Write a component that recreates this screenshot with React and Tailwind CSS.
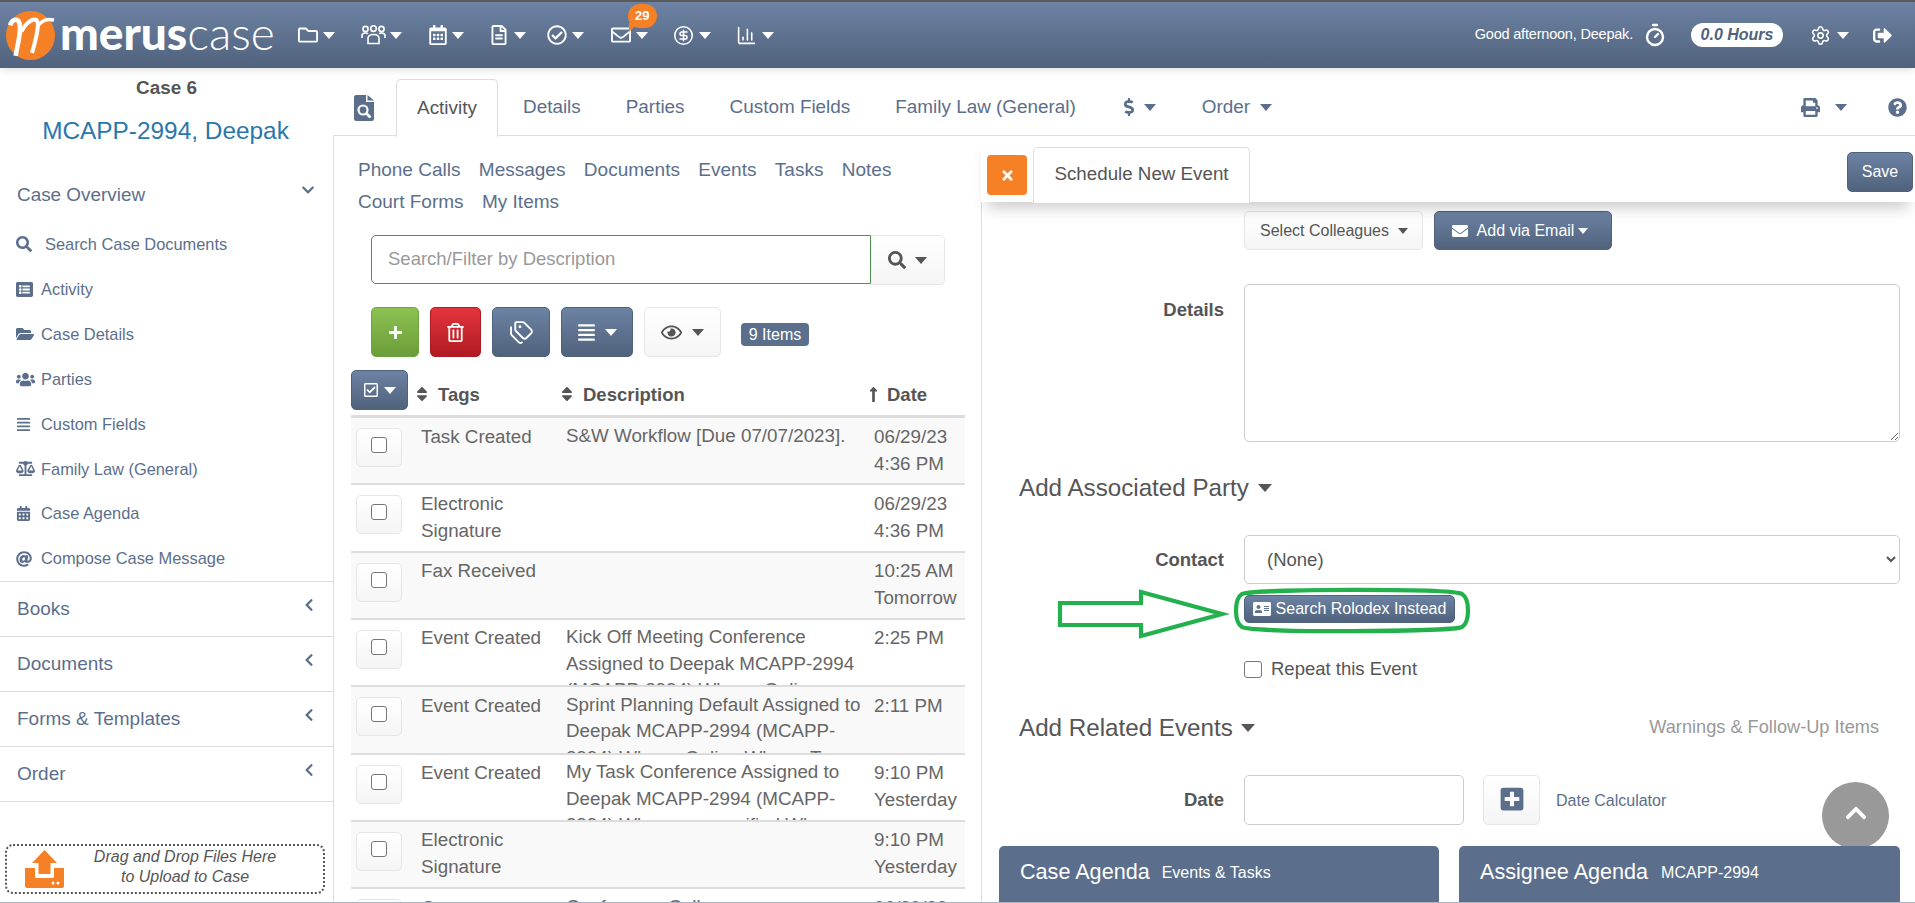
import React from "react";
import {
  FaAddressCard,
  FaAlignJustify,
  FaAt,
  FaBalanceScale,
  FaCalendarAlt,
  FaChevronDown,
  FaChevronLeft,
  FaChevronUp,
  FaDollarSign,
  FaEnvelope,
  FaFolderOpen,
  FaListAlt,
  FaLongArrowAltUp,
  FaPlus,
  FaPlusSquare,
  FaPrint,
  FaQuestionCircle,
  FaRegCalendarAlt,
  FaRegCheckCircle,
  FaRegCheckSquare,
  FaRegEnvelope,
  FaRegEye,
  FaRegFileAlt,
  FaRegFolder,
  FaRegTrashAlt,
  FaSearch,
  FaSignOutAlt,
  FaSort,
  FaTimes,
  FaUsers,
} from "react-icons/fa";
import { ChartColumn, CircleDollarSign, Settings, Tags, Timer } from "lucide-react";

const caretSizes = {
  sm: "border-x-[5px] border-t-[6px]",
  md: "border-x-[6px] border-t-[7px]",
  lg: "border-x-[7px] border-t-[8px]",
};

const Caret = ({ color = "border-t-white", size = "md" }) => (
  <span className={`inline-block w-0 h-0 border-x-transparent ${caretSizes[size]} ${color}`} />
);

const PeopleIcon = () => (
  <svg width="25" height="20" viewBox="0 0 25 20" fill="none" stroke="white" strokeWidth="1.6">
    <circle cx="4.5" cy="4" r="2.6" />
    <circle cx="12.5" cy="3.6" r="2.8" />
    <circle cx="20.5" cy="4" r="2.6" />
    <path d="M1 13v-2.5C1 9 2.5 8 4.5 8c1 0 1.8.2 2.4.7" />
    <path d="M24 13v-2.5C24 9 22.5 8 20.5 8c-1 0-1.8.2-2.4.7" />
    <path d="M7 18.5v-5C7 11 9 9.500 12.500 9.500S18 11 18 13.500v5z" />
  </svg>
);

const Logo = () => (
  <div className="flex items-center ml-[6px]">
    <svg width="49" height="49" viewBox="0 0 48 48" className="shrink-0">
      <circle cx="24" cy="24" r="24" fill="#f58025" />
      <path d="M4 14C6 8 12 6 13.500 13C15 22 11 33 9.500 44" stroke="white" strokeWidth="4.500" fill="none" />
      <path d="M15 20C20 11 26 7 30 9C33 12 30 25 25.500 41" stroke="white" strokeWidth="4" fill="none" />
      <path d="M31 15C35 9 40 7 47 9" stroke="white" strokeWidth="3.500" fill="none" />
    </svg>
    <span className="ml-[5px] font-['Lato',sans-serif] text-[46px] leading-none text-white font-black -mt-[4px]">merus</span>
    <span className="font-['Lato',sans-serif] text-[46px] leading-none text-white font-light -mt-[4px]">case</span>
  </div>
);

const navItems = [
  { icon: <FaRegFolder size={20} color="white" />, width: "w-[63px]", gap: "gap-[5px]" },
  { icon: <PeopleIcon />, width: "w-[67px]", gap: "gap-[4px]" },
  { icon: <FaRegCalendarAlt size={20} color="white" />, width: "w-[61px]", gap: "gap-[4px]" },
  { icon: <FaRegFileAlt size={20} color="white" />, width: "w-[58px]", gap: "gap-[5px]" },
  { icon: <FaRegCheckCircle size={20} color="white" />, width: "w-[64px]", gap: "gap-[5px]" },
  { icon: <FaRegEnvelope size={20} color="white" />, width: "w-[62px]", gap: "gap-[5px]", badge: "29" },
  { icon: <CircleDollarSign size={21} color="white" strokeWidth={1.8} />, width: "w-[63px]", gap: "gap-[5px]" },
  { icon: <ChartColumn size={21} color="white" strokeWidth={1.8} />, width: "w-[50px]", gap: "gap-[5px]" },
];

const Header = () => (
  <header className="h-[68px] shrink-0 border-t-2 border-[#5a5a5a] bg-gradient-to-b from-[#6d83a4] to-[#50627c] flex items-center relative z-20 shadow-[0_2px_8px_rgba(0,0,0,0.12)]">
    <Logo />
    <nav className="flex items-center ml-[23px]">
      {navItems.map((item, i) => (
        <div key={i} className={`relative flex items-center ${item.width} ${item.gap}`}>
          {item.icon}
          <Caret />
          {item.badge && (
            <span className="absolute -top-[21px] left-[17px] w-[29px] h-[24px] rounded-full bg-[#f58025] text-white text-[13px] font-bold flex items-center justify-center">
              {item.badge}
              <span className="absolute left-[1px] -bottom-[4px] w-0 h-0 border-t-[9px] border-r-[9px] border-r-transparent border-t-[#f58025]" />
            </span>
          )}
        </div>
      ))}
    </nav>
    <div className="ml-auto flex items-center text-white">
      <span className="text-[14.500px] tracking-[-0.2px]">Good afternoon, Deepak.</span>
      <Timer size={24} strokeWidth={2.4} className="ml-[10px]" />
      <span className="ml-[24px] w-[92px] h-[24px] rounded-full bg-white text-[#50627c] italic font-bold text-[16px] flex items-center justify-center">
        0.0 Hours
      </span>
      <Settings size={21} strokeWidth={1.8} className="ml-[27px]" />
      <span className="ml-[6px] flex"><Caret /></span>
      <FaSignOutAlt size={19} className="ml-[24px] mr-[23px]" />
    </div>
  </header>
);

const overviewLinks = [
  { label: "Search Case Documents", icon: <FaSearch size={16} />, gap: "w-[29px]" },
  { label: "Activity", icon: <FaListAlt size={17} />, gap: "w-[25px]" },
  { label: "Case Details", icon: <FaFolderOpen size={18} />, gap: "w-[25px]" },
  { label: "Parties", icon: <FaUsers size={19} />, gap: "w-[25px]" },
  { label: "Custom Fields", icon: <FaAlignJustify size={15} />, gap: "w-[25px]" },
  { label: "Family Law (General)", icon: <FaBalanceScale size={19} />, gap: "w-[25px]" },
  { label: "Case Agenda", icon: <FaCalendarAlt size={15} />, gap: "w-[25px]" },
  { label: "Compose Case Message", icon: <FaAt size={16} />, gap: "w-[25px]" },
];

const UploadIcon = () => (
  <svg width="39" height="38" viewBox="0 0 39 38" className="shrink-0">
    <path d="M19.500 0L32 13H25.500V24H13.500V13H7z" fill="#f58025" />
    <path d="M0 18H10V26.500C10 27.500 11 28 12 28H27C28 28 29 27.500 29 26.500V18H39V36C39 37 38 38 37 38H2C1 38 0 37 0 36z" fill="#f58025" />
    <circle cx="28" cy="33" r="1.500" fill="white" />
    <circle cx="33" cy="33" r="1.500" fill="white" />
  </svg>
);

const Sidebar = () => (
  <aside className="w-[333px] shrink-0 flex flex-col relative z-0">
    <div className="mt-[10px] h-[20px] text-center text-[18.900px] leading-[20px] font-bold text-[#555]">Case 6</div>
    <div className="mt-[17px] pr-[2px] h-[32px] text-center text-[24.400px] leading-[32px] text-[#2a78ab]">MCAPP-2994, Deepak</div>
    <div className="mt-[28px] h-[40px] pl-[17px] pr-[18px] flex items-center justify-between text-[18.900px] text-[#5b6f8c]">
      <span>Case Overview</span>
      <FaChevronDown size={14} className="-mt-[10px]" />
    </div>
    <div className="mt-[7px]">
      {overviewLinks.map((link) => (
        <div key={link.label} className="h-[44.900px] pl-[16px] flex items-center text-[16.400px] text-[#5b6f8c]">
          <span className={`flex shrink-0 ${link.gap}`}>{link.icon}</span>
          {link.label}
        </div>
      ))}
    </div>
    {["Books", "Documents", "Forms & Templates", "Order"].map((section) => (
      <div key={section} className="h-[55px] border-t border-[#ddd] pl-[17px] pr-[17px] flex items-center justify-between text-[19px] text-[#5b6f8c]">
        <span>{section}</span>
        <FaChevronLeft size={14} className="-mt-[8px]" />
      </div>
    ))}
    <div className="border-t border-[#ddd]" />
    <div className="mt-[42px] ml-[5px] w-[320px] h-[50px] border-2 border-dotted border-[#555] rounded-[8px] flex items-center pl-[18px]">
      <UploadIcon />
      <div className="flex-1 pr-[17px] -mt-[4px] text-center italic text-[16px] leading-[20px] text-[#555]">
        Drag and Drop Files Here
        <br />
        to Upload to Case
      </div>
    </div>
  </aside>
);

const FileSearchIcon = () => (
  <svg width="20" height="26" viewBox="0 0 20 26" className="shrink-0">
    <path d="M2 0H12V7H20V24C20 25 19 26 18 26H2C1 26 0 25 0 24V2C0 1 1 0 2 0Z" fill="#5b6f8c" />
    <path d="M13.500 0L20 5.500H13.500z" fill="#5b6f8c" />
    <circle cx="9" cy="15" r="4.500" fill="none" stroke="white" strokeWidth="2.200" />
    <path d="M12.500 18.500L16.500 22.500" stroke="white" strokeWidth="2.600" />
  </svg>
);

const TabBar = () => (
  <div className="h-[68px] shrink-0 border-b border-[#ddd] pt-[11px] flex items-center text-[18.900px] text-[#5b6f8c]">
    <span className="ml-[21px] mt-[2px] flex"><FileSearchIcon /></span>
    <div className="ml-[22px] w-[102px] h-[58px] -mb-px bg-white border border-b-0 border-[#ddd] rounded-t-[5px] flex items-center justify-center text-[#555] relative z-10">
      Activity
    </div>
    <span className="ml-[25px]">Details</span>
    <span className="ml-[45px]">Parties</span>
    <span className="ml-[45px]">Custom Fields</span>
    <span className="ml-[45px]">Family Law (General)</span>
    <span className="ml-[44px] flex items-center">
      <FaDollarSign size={18} />
      <span className="ml-[6px] flex"><Caret color="border-t-[#5b6f8c]" /></span>
    </span>
    <span className="ml-[46px]">Order</span>
    <span className="ml-[10px] flex"><Caret color="border-t-[#5b6f8c]" /></span>
    <span className="ml-auto flex"><FaPrint size={19} /></span>
    <span className="ml-[15px] flex"><Caret color="border-t-[#5b6f8c]" /></span>
    <span className="ml-[41px] mr-[8px] flex"><FaQuestionCircle size={19} /></span>
  </div>
);

const rows = [
  { tag: "Task Created", desc: "S&W Workflow [Due 07/07/2023].", date: ["06/29/23", "4:36 PM"] },
  { tag: "Electronic Signature", desc: "", date: ["06/29/23", "4:36 PM"] },
  { tag: "Fax Received", desc: "", date: ["10:25 AM", "Tomorrow"] },
  { tag: "Event Created", desc: "Kick Off Meeting Conference Assigned to Deepak MCAPP-2994 (MCAPP-2994) Where: Online", date: ["2:25 PM"] },
  { tag: "Event Created", desc: "Sprint Planning Default Assigned to Deepak MCAPP-2994 (MCAPP-2994) Where: Online Where: T", date: ["2:11 PM"] },
  { tag: "Event Created", desc: "My Task Conference Assigned to Deepak MCAPP-2994 (MCAPP-2994) Where: unspecified Wh", date: ["9:10 PM", "Yesterday"] },
  { tag: "Electronic Signature", desc: "", date: ["9:10 PM", "Yesterday"] },
  { tag: "Comment", desc: "Conference Call", date: ["06/29/23"] },
];

const blueButton = "bg-gradient-to-b from-[#6d83a4] to-[#50627c] border border-[#50627c] rounded-[5px] text-white flex items-center justify-center";
const whiteButton = "bg-gradient-to-b from-white to-[#f5f5f5] border border-[#e6e6e6] rounded-[5px] flex items-center justify-center";
const checkBox = "appearance-none bg-white border border-[#767676] rounded-[3px]";

const ActivityPanel = () => (
  <section className="w-[648px] shrink-0 border-l border-[#ddd] overflow-hidden">
    <div className="pt-[18px] pl-[24px] pr-[60px] flex flex-wrap gap-x-[18.400px] text-[19px] leading-[32px] text-[#5b6f8c]">
      {["Phone Calls", "Messages", "Documents", "Events", "Tasks", "Notes", "Court Forms", "My Items"].map((link) => (
        <span key={link}>{link}</span>
      ))}
    </div>
    <div className="mt-[17px] ml-[37px] flex h-[50px]">
      <input
        placeholder="Search/Filter by Description"
        className="w-[500px] h-[49px] border border-[#4f8f4f] rounded-l-[5px] pl-[16px] pb-[2px] text-[18.500px] outline-none placeholder:text-[#999]"
      />
      <div className={`${whiteButton} w-[74px] rounded-l-none border-l-0 gap-[9px] text-[#555]`}>
        <FaSearch size={18} />
        <Caret color="border-t-[#555]" />
      </div>
    </div>
    <div className="mt-[22px] ml-[37px] flex items-start h-[50px]">
      <div className="w-[48px] h-[50px] rounded-[5px] border border-[#6fa33f] bg-gradient-to-b from-[#8cc152] to-[#6b9e3a] text-white flex items-center justify-center">
        <FaPlus size={15} />
      </div>
      <div className="ml-[11px] w-[51px] h-[50px] rounded-[5px] border border-[#b01a22] bg-gradient-to-b from-[#e5343c] to-[#b01a22] text-white flex items-center justify-center">
        <FaRegTrashAlt size={19} />
      </div>
      <div className={`${blueButton} ml-[11px] w-[58px] h-[50px]`}>
        <Tags size={25} strokeWidth={1.8} />
      </div>
      <div className={`${blueButton} ml-[11px] w-[72px] h-[50px] gap-[9px]`}>
        <FaAlignJustify size={19} />
        <Caret />
      </div>
      <div className={`${whiteButton} ml-[11px] w-[77px] h-[50px] gap-[10px] text-[#555]`}>
        <FaRegEye size={21} />
        <Caret color="border-t-[#555]" />
      </div>
      <span className="ml-[20px] mt-[16px] w-[68px] h-[23px] rounded-[4px] bg-[#5b6f8c] text-white text-[16px] flex items-center justify-center">
        9 Items
      </span>
    </div>
    <div className="mt-[13px] ml-[17px] w-[614px]">
      <div className="h-[48px] border-b-[3px] border-[#ddd] flex items-start font-bold text-[18.500px] text-[#555]">
        <div className={`${blueButton} w-[57px] h-[40px] gap-[5px]`}>
          <FaRegCheckSquare size={16} />
          <Caret />
        </div>
        <span className="ml-[5px] w-[144.500px] mt-[10.500px] flex items-center">
          <FaSort size={18} />
          <span className="ml-[7px]">Tags</span>
        </span>
        <span className="w-[307px] mt-[10.500px] flex items-center">
          <FaSort size={18} />
          <span className="ml-[7.500px]">Description</span>
        </span>
        <span className="mt-[10.500px] flex items-center">
          <FaLongArrowAltUp size={17} />
          <span className="ml-[5.500px]">Date</span>
        </span>
      </div>
      {rows.map((row, i) => (
        <div
          key={i}
          className={`h-[67.330px] border-b-2 border-[#ddd] overflow-hidden flex items-start text-[18.800px] leading-[27px] text-[#666] ${i % 2 === 0 ? "bg-[#f9f9f9]" : "bg-white"}`}
        >
          <div className={`${whiteButton} ml-[5px] mt-[10px] w-[46px] h-[39px] shrink-0`}>
            <input type="checkbox" className={`${checkBox} w-[16px] h-[16px] mb-[5px]`} />
          </div>
          <div className="ml-[19px] mt-[4.500px] w-[128px] shrink-0">{row.tag}</div>
          <div className="ml-[17px] mt-[4.500px] w-[300px] shrink-0 leading-[26.400px]">{row.desc}</div>
          <div className="ml-[8px] mt-[4.500px] whitespace-nowrap">
            {row.date.map((line) => (
              <div key={line}>{line}</div>
            ))}
          </div>
        </div>
      ))}
    </div>
  </section>
);

const FormLabel = ({ children, extra = "" }) => (
  <label className={`w-[242px] shrink-0 text-right font-bold text-[18.500px] leading-[26px] text-[#555] ${extra}`}>{children}</label>
);

const EventPanel = () => (
  <section className="flex-1 border-l border-[#ddd] flex flex-col min-w-0 text-[#555]">
    <div className="h-[66px] shrink-0 -ml-px bg-white relative z-10 shadow-[0_12px_14px_-6px_rgba(0,0,0,0.2)] flex items-start">
      <div className="ml-[6px] mt-[19px] w-[40px] h-[40px] rounded-[4px] bg-[#f58025] text-white flex items-center justify-center">
        <FaTimes size={15} />
      </div>
      <div className="ml-[6px] mt-[11px] w-[217px] h-[56px] pb-[2px] bg-white border border-b-0 border-[#ddd] rounded-t-[5px] flex items-center justify-center text-[18.750px]">
        Schedule New Event
      </div>
      <div className={`${blueButton} ml-auto mr-[2px] mt-[16px] w-[66px] h-[40px] text-[16px]`}>Save</div>
    </div>

    <div className="mt-[9px] ml-[262px] flex h-[39px] gap-[11px] text-[16px]">
      <div className={`${whiteButton} w-[179px] pl-[1px] gap-[9px]`}>
        Select Colleagues
        <Caret color="border-t-[#555]" size="sm" />
      </div>
      <div className={`${blueButton} w-[178px] pr-[6px] gap-[4px]`}>
        <FaEnvelope size={16} className="mr-[5px]" />
        Add via Email
        <Caret size="sm" />
      </div>
    </div>

    <div className="mt-[34px] flex gap-[20px]">
      <FormLabel extra="pt-[13px]">Details</FormLabel>
      <textarea className="w-[656px] h-[158px] border border-[#ccc] rounded-[5px] outline-none" />
    </div>

    <div className="mt-[30px] ml-[37px] h-[32px] flex items-center gap-[9px] text-[24.200px]">
      Add Associated Party
      <Caret color="border-t-[#555]" size="lg" />
    </div>

    <div className="mt-[31px] flex gap-[20px] items-center">
      <FormLabel>Contact</FormLabel>
      <select className="w-[656px] h-[49px] bg-white border border-[#ccc] rounded-[5px] pl-[18px] text-[18.500px] text-[#555] outline-none">
        <option>(None)</option>
      </select>
    </div>

    <div className="mt-[11px] ml-[262px]">
      <button className={`${blueButton} w-[211px] h-[28px] gap-[5px] text-[16px]`}>
        <FaAddressCard size={18} />
        Search Rolodex Instead
      </button>
    </div>

    <div className="mt-[37px] ml-[262px] h-[18px] flex items-center gap-[9px] text-[18.500px]">
      <input type="checkbox" className={`${checkBox} w-[18px] h-[17px]`} />
      Repeat this Event
    </div>

    <div className="mt-[34px] ml-[37px] pr-[36px] h-[32px] flex items-center">
      <span className="text-[24.200px]">Add Related Events</span>
      <span className="ml-[8px] flex"><Caret color="border-t-[#555]" size="lg" /></span>
      <span className="ml-auto text-[18.200px] text-[#999]">Warnings &amp; Follow-Up Items</span>
    </div>

    <div className="mt-[31px] h-[50px] flex items-center gap-[20px]">
      <FormLabel>Date</FormLabel>
      <input className="w-[220px] h-[50px] border border-[#ccc] rounded-[5px] outline-none" />
      <div className={`${whiteButton} -ml-px w-[57px] h-[50px] text-[#5b6f8c]`}>
        <FaPlusSquare size={26} className="-mt-[2px]" />
      </div>
      <span className="-ml-[4px] mt-[2px] text-[16px] text-[#5b6f8c]">Date Calculator</span>
    </div>

    <div className="mt-[21px] ml-[17px] flex gap-[20px] h-[56px] relative z-10">
      <div className="w-[440px] rounded-t-[5px] bg-[#5b6f8c] text-white pl-[21px] pb-[4px] flex items-center">
        <span className="text-[21.600px]">Case Agenda</span>
        <span className="ml-[12px] mt-[1px] text-[16px]">Events &amp; Tasks</span>
      </div>
      <div className="w-[441px] rounded-t-[5px] bg-[#5b6f8c] text-white pl-[21px] pb-[4px] flex items-center">
        <span className="text-[21.600px]">Assignee Agenda</span>
        <span className="ml-[13px] mt-[1px] text-[16px]">MCAPP-2994</span>
      </div>
    </div>
  </section>
);

// the green markup drawn on top of the screenshot
const Annotation = () => (
  <svg width="420" height="60" viewBox="0 0 420 60" className="absolute left-[1056px] top-[582px] z-30" fill="none" stroke="#22b14c" strokeWidth="4.200">
    <path d="M4 21H85V10L166 32L85 54V43H4Z" />
    <path d="M186 12C195 7 395 6 406 12C414 17 414 40 406 45C395 50 195 51 186 45C178 40 178 17 186 12Z" />
  </svg>
);

const App = () => (
  <div className="w-[1915px] h-[903px] overflow-hidden relative bg-white flex flex-col font-['Liberation_Sans',Arial,sans-serif]">
    <Header />
    <div className="flex h-[834px] shrink-0">
      <Sidebar />
      <main className="flex-1 min-w-0 flex flex-col">
        <TabBar />
        <div className="flex flex-1 min-h-0">
          <ActivityPanel />
          <EventPanel />
        </div>
      </main>
    </div>
    <div className="h-px shrink-0 bg-[#aab4c4]" />
    <Annotation />
    <div className="absolute left-[1822px] top-[782px] w-[67px] h-[67px] rounded-full bg-[#999] text-white flex items-center justify-center">
      <FaChevronUp size={24} className="-mt-[6px]" />
    </div>
  </div>
);

export default App;
